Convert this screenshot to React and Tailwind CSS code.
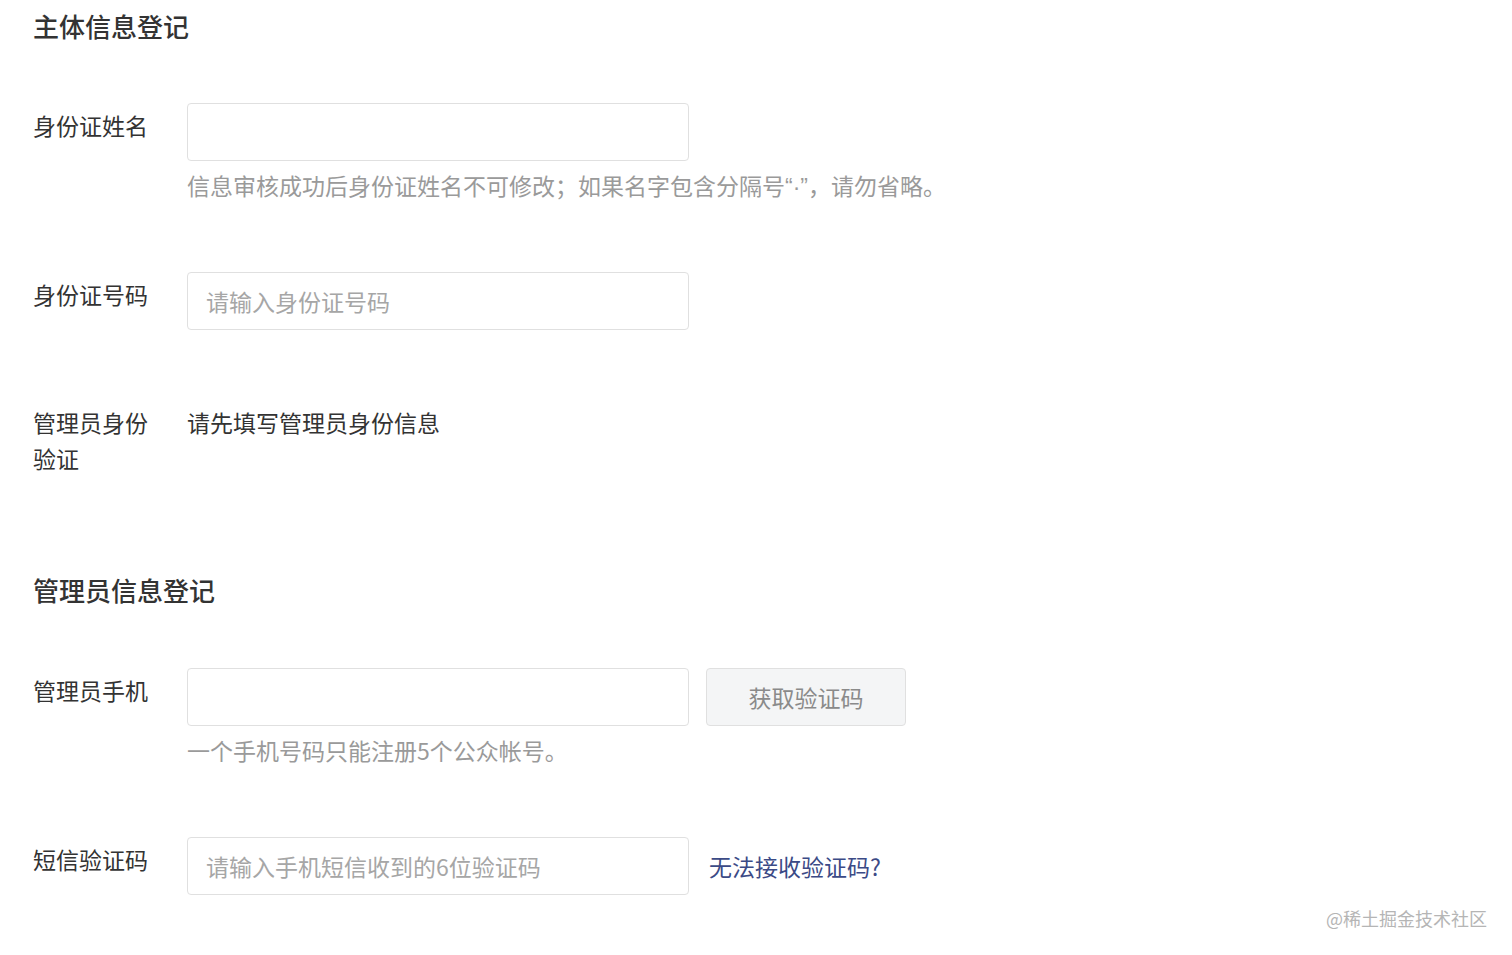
import React from 'react';

const font = { fontFamily: '"Noto Sans CJK SC", "Noto Sans", sans-serif' };
const latin = { fontFamily: '"Liberation Sans", "Noto Sans CJK SC", sans-serif' };

const Row = ({ label, children, className = '' }) => (
  <div className={`flex ${className}`}>
    <div className="w-[122px] mr-[32px] pt-[4px] text-[23px] leading-[36px] text-[#333]">{label}</div>
    <div className="flex-1">{children}</div>
  </div>
);

const Input = ({ placeholder }) => (
  <input
    type="text"
    placeholder={placeholder}
    className="block w-[502px] h-[58px] px-[18px] text-[23px] text-[#333] border border-[#e0e0e0] rounded-[4px] outline-none placeholder:text-[#a6a6a6] bg-white"
  />
);

const Help = ({ children }) => (
  <p className="mt-[6px] text-[23px] leading-[36px] text-[#9a9a9a]">{children}</p>
);

export default function App() {
  return (
    <div className="relative min-h-[955px] bg-white px-[33px]" style={font}>
      {/* 主体信息 */}
      <h2 className="pt-[8px] text-[26px] leading-[36px] font-medium text-[#333]">主体信息登记</h2>

      <Row label="身份证姓名" className="mt-[59px]">
        <Input />
        <Help>
          信息审核成功后身份证姓名不可修改；如果名字包含分隔号<span style={latin}>“·”</span>，请勿省略。
        </Help>
      </Row>

      <Row label="身份证号码" className="mt-[67px]">
        <Input placeholder="请输入身份证号码" />
      </Row>

      <Row label="管理员身份验证" className="mt-[70px]">
        <p className="pt-[4px] text-[23px] leading-[36px] text-[#333]">请先填写管理员身份信息</p>
      </Row>

      {/* 管理员信息 */}
      <h2 className="mt-[96px] text-[26px] leading-[36px] font-medium text-[#333]">管理员信息登记</h2>

      <Row label="管理员手机" className="mt-[60px]">
        <div className="flex items-center gap-[17px]">
          <Input />
          <button className="w-[200px] h-[58px] bg-[#f4f5f6] border border-[#e0e0e0] rounded-[4px] text-[23px] text-[#8a8a8a]">
            获取验证码
          </button>
        </div>
        <Help>一个手机号码只能注册5个公众帐号。</Help>
      </Row>

      <Row label="短信验证码" className="mt-[69px]">
        <div className="flex items-center gap-[20px]">
          <Input placeholder="请输入手机短信收到的6位验证码" />
          <a href="#" className="text-[23px] text-[#3b4a86]">无法接收验证码?</a>
        </div>
      </Row>

      <div className="absolute right-[25px] top-[906px] text-[18px] leading-[24px] text-[#b5b5b5]">@稀土掘金技术社区</div>
    </div>
  );
}
